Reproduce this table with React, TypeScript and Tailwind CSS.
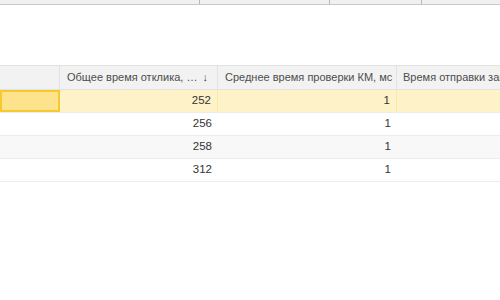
import React from "react";

const rows = [
  { total: 252, check: 1, selected: true },
  { total: 256, check: 1 },
  { total: 258, check: 1 },
  { total: 312, check: 1 },
];

export default function App() {
  return (
    <div
      className="w-[500px] h-[300px] bg-white overflow-hidden text-[11px] text-[#333]"
      style={{ fontFamily: '"Liberation Sans", Arial, sans-serif' }}
    >
      {/* upper toolbar strip */}
      <div className="flex h-[5px] bg-[#f0f0f0] border-b border-[#c8c8c8]">
        <div className="w-[200px] border-r border-[#b8b8b8]" />
        <div className="w-[130px] border-r border-[#b8b8b8]" />
        <div className="w-[92px] border-r border-[#b8b8b8]" />
        <div className="flex-1" />
      </div>

      <div className="h-[60px]" />

      {/* grid */}
      <div className="border-t border-[#e2e2e2]">
        <div className="flex h-[24px] bg-[#f2f2f2] border-b border-[#e2e2e2] text-[#4d4d4d] whitespace-nowrap">
          <div className="w-[60px] shrink-0 border-r border-[#e2e2e2]" />
          <div className="w-[158px] shrink-0 border-r border-[#e2e2e2] flex items-center justify-between pl-[7px] pr-[9px]">
            <span>Общее время отклика, …</span>
            <span>↓</span>
          </div>
          <div className="w-[179px] shrink-0 border-r border-[#e2e2e2] flex items-center pl-[7px] overflow-hidden">
            Среднее время проверки КМ, мс
          </div>
          <div className="flex-1 flex items-center pl-[6px] overflow-hidden">
            Время отправки запроса
          </div>
        </div>

        {rows.map((r, i) => (
          <div
            key={r.total}
            className={
              "flex h-[23px] border-b border-[#ececec] text-[11.5px] " +
              (r.selected ? "bg-[#fdf2c8]" : i % 2 === 0 ? "bg-[#f8f8f8]" : "bg-white")
            }
          >
            <div
              className={
                "w-[60px] shrink-0 " +
                (r.selected ? "bg-[#fee38d] border-2 border-[#f7c92e]" : "")
              }
            />
            <div
              className={
                "w-[158px] shrink-0 flex items-center justify-end pr-[6px] " +
                (r.selected ? "border-r border-[#fbe9a9]" : "")
              }
            >
              {r.total}
            </div>
            <div
              className={
                "w-[179px] shrink-0 flex items-center justify-end pr-[6px] " +
                (r.selected ? "border-r border-[#fbe9a9]" : "")
              }
            >
              {r.check}
            </div>
            <div className="flex-1" />
          </div>
        ))}
      </div>
    </div>
  );
}
